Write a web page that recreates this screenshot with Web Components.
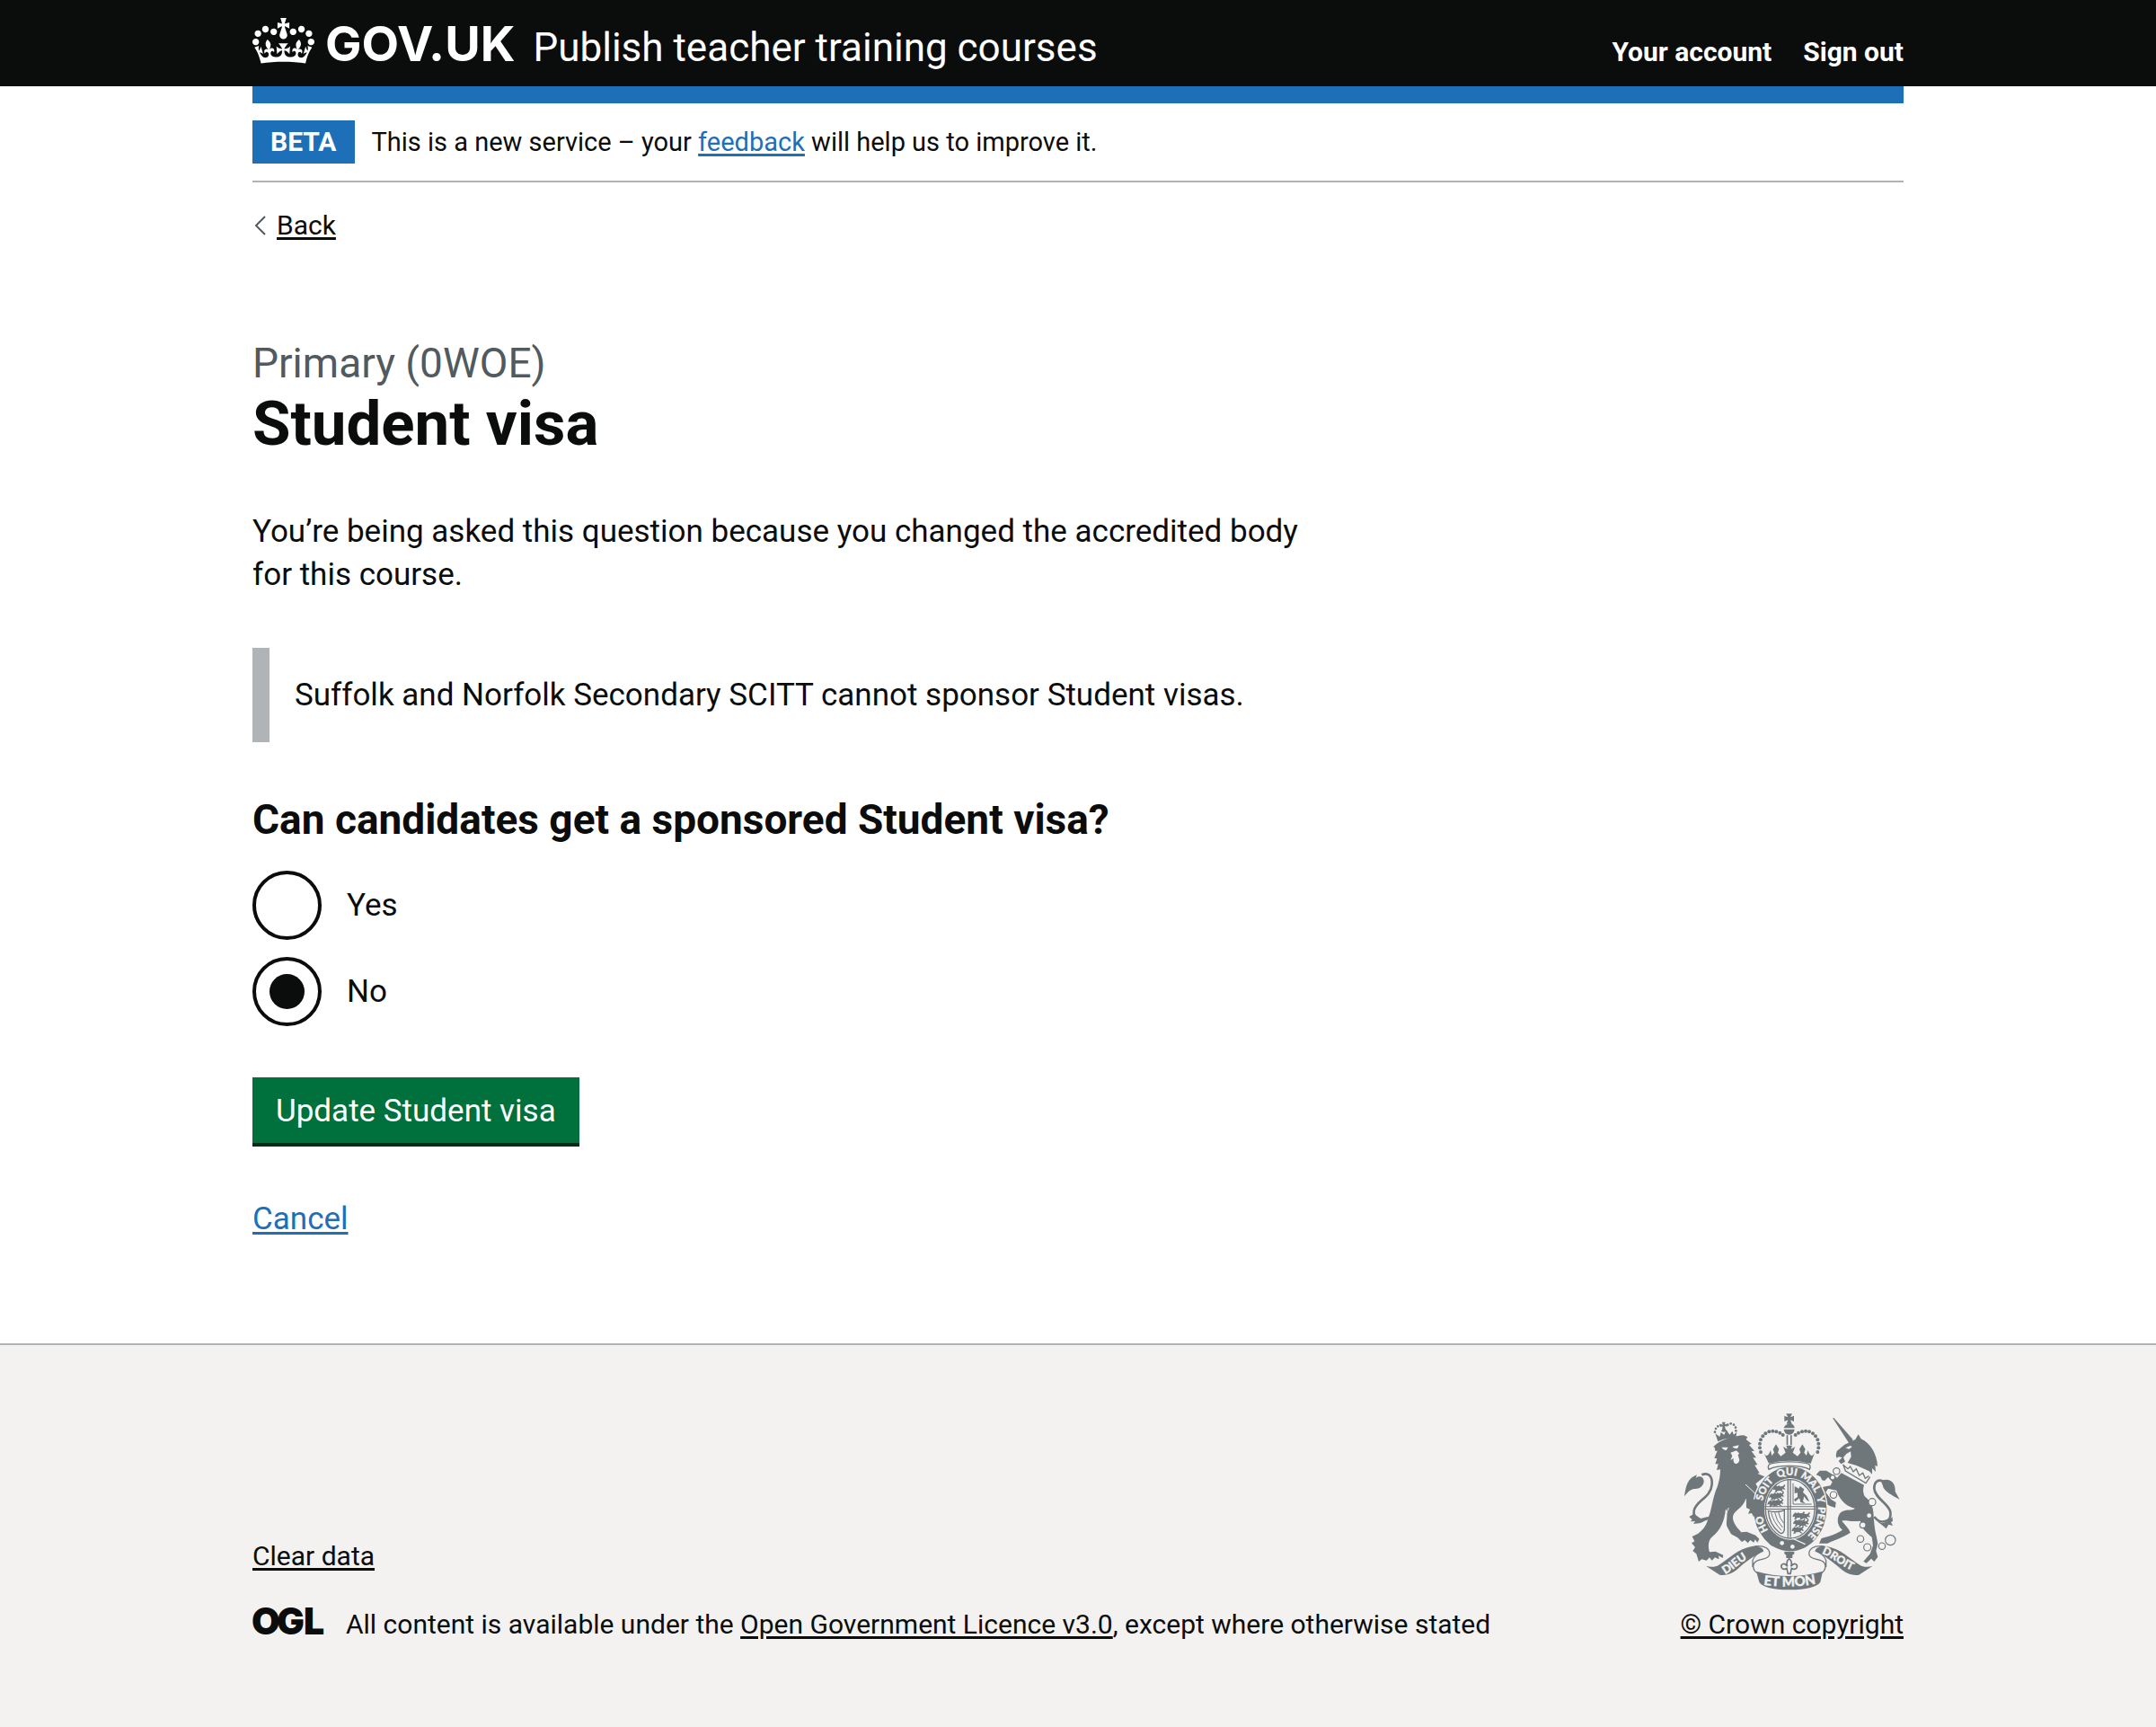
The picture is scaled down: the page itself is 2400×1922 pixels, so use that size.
<!DOCTYPE html>
<html lang="en">
<head>
<meta charset="utf-8">
<meta name="viewport" content="width=device-width, initial-scale=1">
<title>Student visa – Publish teacher training courses – GOV.UK</title>
<style>
  :root {
    --ink: #0b0c0c;
    --blue: #1d70b8;
    --mid-grey: #b1b4b6;
    --light-grey: #f3f2f1;
    --secondary: #505a5f;
    --green: #00703c;
    --green-dark: #002d18;
    --crest: #6f777b;
    --page-width: 1838px;
    --text-s: 30px;
    --text-m: 35px;
    --text-l: 46px;
    --text-xl: 69px;
    --line-s: 38px;
    --line-m: 48px;
  }
  body {
    margin: 0;
    min-height: 100vh;
    display: flex;
    flex-direction: column;
    font-family: Roboto, Arial, sans-serif;
    font-size: var(--text-m);
    line-height: var(--line-m);
    color: var(--ink);
    background: #fff;
  }
  site-footer { flex: 1; }
</style>
</head>
<body>
<site-header service="Publish teacher training courses">
  <site-link slot="nav" tone="inverse" href="#account">Your account</site-link>
  <site-link slot="nav" tone="inverse" href="#sign-out">Sign out</site-link>
</site-header>
<page-container>
  <phase-banner tag="BETA">This is a new service – your <site-link href="#feedback">feedback</site-link> will help us to improve it.</phase-banner>
  <back-link href="#back">Back</back-link>
  <page-main>
    <page-heading caption="Primary (0WOE)">Student visa</page-heading>
    <body-text>You’re being asked this question because you changed the accredited body for this course.</body-text>
    <inset-text>Suffolk and Norfolk Secondary SCITT cannot sponsor Student visas.</inset-text>
    <visa-form></visa-form>
  </page-main>
</page-container>
<site-footer></site-footer>

<script>
const define = (name, render) => customElements.define(name, class extends HTMLElement {
  connectedCallback() {
    if (this.shadowRoot) return;
    this.attachShadow({ mode: 'open' }).innerHTML = render(this);
  }
});

define('site-link', el => `
  <style>
    :host { display: inline; }
    a { color: var(--blue); text-decoration-thickness: 3px; text-underline-offset: 3px; }
    :host([tone="plain"]) a { color: var(--ink); }
    :host([tone="inverse"]) a { color: #fff; font-weight: 700; text-decoration: none; }
  </style>
  <a href="${el.getAttribute('href')}"><slot></slot></a>`);

define('page-container', () => `
  <style>
    :host { display: block; box-sizing: border-box; width: calc(100% - 60px); max-width: var(--page-width); margin: 0 auto; }
  </style>
  <slot></slot>`);

define('crown-logo', () => `
  <style>
    :host { display: block; color: #fff; font: 700 54px/54px Inter, Arial, sans-serif; white-space: nowrap; }
    svg { width: 69px; height: 51px; margin-right: 12px; vertical-align: -3px; fill: currentColor; }
  </style>
  <svg viewBox="0 0 132 97" preserveAspectRatio="none" aria-hidden="true"><path d="M25 30.2c3.5 1.5 7.7-.2 9.1-3.7 1.5-3.6-.2-7.8-3.9-9.2-3.6-1.4-7.6.3-9.1 3.9-1.4 3.5.3 7.5 3.9 9zM9 39.5c3.6 1.5 7.8-.2 9.2-3.7 1.5-3.6-.2-7.8-3.9-9.1-3.6-1.5-7.6.2-9.1 3.8-1.4 3.5.3 7.5 3.8 9zM4.4 57.2c3.5 1.5 7.7-.2 9.1-3.8 1.5-3.6-.2-7.7-3.9-9.1-3.5-1.5-7.6.3-9.1 3.8-1.4 3.5.3 7.6 3.9 9.1zm38.3-21.4c3.5 1.5 7.7-.2 9.1-3.8 1.5-3.6-.2-7.7-3.9-9.1-3.6-1.5-7.6.3-9.1 3.8-1.3 3.6.4 7.7 3.9 9.1zm64.4-5.6c-3.6 1.5-7.8-.2-9.1-3.7-1.5-3.6.2-7.8 3.8-9.2 3.6-1.4 7.7.3 9.2 3.9 1.3 3.5-.4 7.5-3.9 9zm15.9 9.3c-3.6 1.5-7.7-.2-9.1-3.7-1.5-3.6.2-7.8 3.7-9.1 3.6-1.5 7.7.2 9.2 3.8 1.5 3.5-.3 7.5-3.8 9zm4.7 17.7c-3.6 1.5-7.8-.2-9.2-3.8-1.5-3.6.2-7.7 3.9-9.1 3.6-1.5 7.7.3 9.2 3.8 1.3 3.5-.4 7.6-3.9 9.1zM89.3 35.8c-3.6 1.5-7.8-.2-9.2-3.8-1.4-3.6.2-7.7 3.9-9.1 3.6-1.5 7.7.3 9.2 3.8 1.4 3.6-.3 7.7-3.9 9.1zM69.7 17.7l8.9 4.7V9.3l-8.9 2.8c-.2-.3-.5-.6-.9-.9L72.4 0H59.6l3.5 11.2c-.3.3-.6.5-.9.9l-8.8-2.8v13.1l8.8-4.7c.3.3.6.7.9.9l-5 15.4v.1c-.2.8-.4 1.6-.4 2.4 0 4.1 3.1 7.5 7 8.1h.2c.3 0 .7.1 1 .1.4 0 .7 0 1-.1h.2c4-.6 7.1-4.1 7.1-8.1 0-.8-.1-1.7-.4-2.4V34l-5.1-15.4c.4-.2.7-.6 1-.9zM66 92.8c16.9 0 32.8 1.1 47.1 3.2 4-16.9 8.9-26.7 14-33.5l-9.6-3.4c1 4.9 1.1 7.2 0 10.2-1.5-1.4-3-4.3-4.2-8.7L108.6 76c2.8-2 5-3.2 7.5-3.3-4.4 9.4-10 11.9-13.6 11.2-4.3-.8-6.3-4.6-5.6-7.9 1-4.7 5.7-5.9 8-.5 4.3-8.7-3-11.4-7.6-8.8 7.1-7.2 7.9-13.5 2.1-21.1-8 6.1-8.1 12.3-4.5 20.8-4.7-5.4-12.1-2.5-9.5 6.2 3.4-5.2 7.9-2 7.2 3.1-.6 4.3-6.4 7.8-13.5 7.2-10.3-.9-10.9-8-11.2-13.8 2.5-.5 7.1 1.8 11 7.3L80.2 60c-4.1 4.4-8 5.3-12.3 5.4 1.4-4.4 8-11.6 8-11.6H55.5s6.4 7.2 7.9 11.6c-4.2-.1-8-1-12.3-5.4l1.4 16.4c3.9-5.5 8.5-7.7 10.9-7.3-.3 5.8-.9 12.8-11.1 13.8-7.2.6-12.9-2.9-13.5-7.2-.7-5 3.8-8.3 7.1-3.1 2.7-8.7-4.6-11.6-9.4-6.2 3.7-8.5 3.6-14.7-4.6-20.8-5.8 7.6-5 13.9 2.2 21.1-4.7-2.6-11.9.1-7.7 8.8 2.3-5.5 7.1-4.2 8.1.5.7 3.3-1.3 7.1-5.7 7.9-3.5.7-9-1.8-13.5-11.2 2.5.1 4.7 1.3 7.5 3.3l-4.7-15.4c-1.2 4.4-2.7 7.2-4.3 8.7-1.1-3-.9-5.3 0-10.2l-9.5 3.4c5 6.9 9.9 16.7 14 33.5 14.8-2.1 30.8-3.2 47.7-3.2z"/></svg><span>GOV.UK</span>`);

define('site-header', el => `
  <style>
    :host { display: block; background: var(--ink); }
    header { display: flex; align-items: baseline; box-sizing: border-box; min-height: 96px; padding: 20px 0 0; }
    a { color: #fff; text-decoration: none; }
    .service { margin-left: 20px; font-size: 44px; line-height: 48px; }
    nav { display: flex; gap: 35px; margin-left: auto; font-size: var(--text-s); line-height: var(--line-s); }
    .bar { height: 19px; background: var(--blue); }
    .under { background: #fff; }
  </style>
  <page-container><header>
    <a href="#home" aria-label="GOV.UK"><crown-logo></crown-logo></a>
    <a class="service" href="#service">${el.getAttribute('service')}</a>
    <nav aria-label="Account"><slot name="nav"></slot></nav>
  </header></page-container>
  <div class="under"><page-container><div class="bar"></div></page-container></div>`);

define('phase-banner', el => `
  <style>
    :host { display: flex; align-items: baseline; gap: 19px; padding: 19px 0; border-bottom: 2px solid var(--mid-grey); font-size: 29px; line-height: 48px; }
    strong { padding: 0 20px; background: var(--blue); color: #fff; font-size: var(--text-s); }
  </style>
  <strong>${el.getAttribute('tag')}</strong><span><slot></slot></span>`);

define('back-link', el => `
  <style>
    :host { display: block; padding-top: 29px; font-size: var(--text-s); line-height: var(--line-s); }
    a { display: inline-flex; align-items: center; gap: 11px; color: var(--ink); text-decoration: none; }
    span { text-decoration: underline 3px; text-underline-offset: 3px; }
    svg { width: 16px; height: 24px; fill: none; stroke: var(--secondary); stroke-width: 2; }
  </style>
  <a href="${el.getAttribute('href')}"><svg viewBox="0 0 16 24" aria-hidden="true"><path d="M14 2 4 12l10 10"/></svg><span><slot></slot></span></a>`);

define('page-main', () => `
  <style>
    :host { display: block; padding: 103px 0 114px; }
    main { display: flex; flex-direction: column; gap: 57px; max-width: 1206px; }
  </style>
  <main><slot></slot></main>`);

define('page-heading', el => `
  <style>
    :host { display: block; }
    .caption { display: block; color: var(--secondary); font-size: var(--text-l); line-height: 58px; }
    h1 { margin: 0; font-size: var(--text-xl); line-height: 78px; font-weight: 700; }
  </style>
  <span class="caption">${el.getAttribute('caption')}</span><h1><slot></slot></h1>`);

define('body-text', () => `
  <style>:host { display: block; } p { margin: 0; }</style>
  <p><slot></slot></p>`);

define('inset-text', () => `
  <style>:host { display: block; padding: 29px 28px 28px; border-left: 19px solid var(--mid-grey); }</style>
  <slot></slot>`);

define('visa-form', () => `
  <style>
    :host { display: block; }
    form { display: flex; flex-direction: column; align-items: flex-start; gap: 57px; }
    fieldset { margin: 0; padding: 0; border: 0; min-width: 0; }
    legend { padding: 0; margin-bottom: 28px; font-size: var(--text-l); line-height: 58px; font-weight: 700; }
    .options { display: flex; flex-direction: column; gap: 19px; }
    .option { display: flex; align-items: center; gap: 28px; }
    input {
      appearance: none; flex: none; box-sizing: border-box; width: 77px; height: 77px; margin: 0;
      border: 4px solid var(--ink); border-radius: 50%;
      display: grid; place-items: center;
    }
    input:checked::before { content: ""; width: 39px; height: 39px; border-radius: 50%; background: var(--ink); }
    button {
      margin: 0; padding: 16px 26px 13px; border: 0; border-radius: 0;
      background: var(--green); color: #fff; box-shadow: 0 4px 0 var(--green-dark);
      font: inherit; line-height: 44px;
    }
    .cancel { margin-top: 4px; }
  </style>
  <form>
    <fieldset>
      <legend>Can candidates get a sponsored Student visa?</legend>
      <div class="options">
        <div class="option"><input type="radio" name="visa" id="visa-yes" value="yes"><label for="visa-yes">Yes</label></div>
        <div class="option"><input type="radio" name="visa" id="visa-no" value="no" checked><label for="visa-no">No</label></div>
      </div>
    </fieldset>
    <button type="submit">Update Student visa</button>
    <site-link class="cancel" href="#cancel">Cancel</site-link>
  </form>`);

define('ogl-logo', () => `
  <style>
    :host { display: block; flex: none; }
    svg { display: block; width: 79px; height: 38px; overflow: visible; fill: var(--ink); font: 900 41px Inter, Arial, sans-serif; }
  </style>
  <svg viewBox="0 0 79 38" role="img" aria-label="Open Government Licence"><text x="-1 27 57" y="30">OGL</text></svg>`);

const pearls = [[357,168],[354,154],[354,140],[357,127],[364,115],[373,106],[385,100],[397,98],[409,100],[421,104],[431,111]];
const dots = (list, r) => list.map(([x, y]) => `<circle cx="${x}" cy="${y}" r="${r}"/>`).join('');
const beast = 'M0 8l7-7 7 3 3-4 5 4 9-1 5-6 3 4-5 7 5 4-3 3-6-3-2 5 6 3-3 3-8-5-10 1-4 5-6-1 4-5-3-4-6 2z';

define('royal-arms', () => `
  <style>
    :host { display: block; }
    svg { display: block; width: 244px; height: 198px; fill: var(--crest); }
    .line { fill: none; stroke: var(--crest); }
    .paper { fill: var(--light-grey); }
    .gap { fill: none; stroke: var(--light-grey); }
    text { fill: var(--light-grey); stroke: var(--light-grey); stroke-width: 1; font-family: Lato, Arial, sans-serif; font-weight: 900; }
  </style>
  <svg viewBox="96 36 732 594" role="img" aria-label="Royal coat of arms">
    <defs>
      <path id="garter" d="M455 471A94 113 0 0 1 455 245A94 113 0 0 1 455 471"/>
      <path id="left" d="M238 576C268 562 296 526 340 512"/>
      <path id="mid" d="M366 611Q452 625 545 607"/>
      <path id="right" d="M560 507C606 524 634 560 690 572"/>
      <path id="beast" d="${beast}"/>
    </defs>

    <!-- lion -->
    ${dots([[204,101],[207,90],[214,82],[223,78],[247,77],[257,73],[267,77],[273,86],[274,97]], 4)}
    <path d="M228 68h11l-2 8 8-2v9l-8-2 2 10 6 8-12 2-8-2 4-8 0-9-7 3v-9l8 1z"/>
    <path d="M205 106l9 27Q243 119 274 121l3-20-10 9-5-12-9 12-11-16-7 17-11-9-4 15z"/>
    <path d="M198 151l15-13C240 122 270 114 300 112l13 6-5 8 18 14-8 4 18 20-10 1 16 22-11 0 15 23-9 2 16 26-7 2 24 10-30 24 26 44 14 36 0 26-9-6-4 12-10-12-8 10-6-12-14 2 6-14-12-6 12-10-6-12-22-8C300 345 290 352 272 368C258 382 264 400 278 420l14 16 18-2 30 12 12 12-6 12-8-10-4 10-12-8-8 10-10-10-10 6-14-14-22-12-14-26C240 400 250 370 240 358C236 400 222 430 196 450C182 462 180 480 186 502l20-2 26 12-2 10-14-8 2 12-14-6-10 10-8-10-10 10-16-4-10 8-8-26-12-10 8-12-12-14 10-6-8-16 20-10C176 420 178 400 188 370C196 340 200 310 212 284C220 262 222 240 222 226l-12 2 5-20-10 0 6-18-9-2 10-24-7 0-2-12z"/>
    <path class="paper" d="M226 152l22 0-6 10q-8 2-16-10zM262 150l22-5-4 10q-10 4-18-5zM256 170l20-7 10 10-5 4 5 18q-4 14-14 12-8-4-6-18l-10 6 6-14z"/>
    <path class="gap" stroke-width="3" d="M306 276l30 28 24 44M250 354l-8 20"/>
    <path class="line" stroke-width="8" d="M187 386C160 404 130 392 134 364C140 330 190 322 194 276C196 244 180 236 160 244"/>
    <path d="M102 316C106 290 110 262 132 250l12-6-4 10C152 246 166 250 167 264C168 282 150 292 136 291C120 292 112 304 102 316zM118 384l16-10 22 16 24-6C170 402 156 408 132 407l6-8-16 1 6-6z"/>

    <!-- unicorn -->
    <path d="M597 54l5 1 62 70 0 10-12 4z"/>
    <path d="M608 179l3-14 26-22 36-17 10-17 9 15C722 138 746 174 747 216l-8-4 2 22-12-12 0 20-10-10-40-18-32-10 12-20-2-18-14 8-10 12 6 14-14 8-8-10 12-12-12-2-6 4z"/>
    <path class="paper" d="M640 154l16-7 6 3-10 8z"/>
    <path class="line" stroke-width="4" d="M632 209l8 22 68 41 14-21M634 212l14 12 8-8 10 18 10-10 10 22 12-8 8 18 12-8"/>
    <path d="M626 238l76 40C698 292 698 302 704 316C724 332 734 352 734 382C736 410 738 430 744 452l4 22-6 24 6 20-12 16-10-10-16 15-10-6 22-25 10-28-4-28C712 438 690 420 690 398C660 402 640 394 628 398C640 412 652 424 656 437C630 455 604 460 580 473l-28 0 8-17 22-6C600 445 618 436 630 428C610 414 610 384 624 370C640 356 660 366 672 356C650 352 622 334 610 296l-28-6-8 12 18 24 16 10-2 18-18-6-18-10-6-20-10-14 12-20 24-4 6-12-14-16-12 12-8-2-6-12-14-6 12-14 22 0 22 14 14 10z"/>
    <path class="line" stroke-width="8" d="M736 384C756 412 796 402 790 368C784 340 738 322 736 290C736 266 750 258 766 266"/>
    <path d="M758 264C790 252 808 272 806 300l15 26-20-10C790 306 768 300 764 278zM744 398l20 8 16-6 16-16 2 14-6 4 6 12-14-4-8 14-14-12z"/>
    <g class="paper" stroke="var(--crest)" stroke-width="3.5">
      <circle cx="610" cy="232" r="11"/><circle cx="597" cy="253" r="8"/><circle cx="600" cy="311" r="11"/><circle cx="729" cy="335" r="12"/>
      <circle cx="719" cy="380" r="9"/><circle cx="698" cy="412" r="10"/><circle cx="690" cy="458" r="11"/>
      <circle cx="713" cy="486" r="12"/><circle cx="762" cy="482" r="11"/><circle cx="790" cy="462" r="17"/>
    </g>

    <!-- garter and shield -->
    <ellipse class="paper" cx="455" cy="358" rx="126" ry="145"/>
    <ellipse cx="455" cy="358" rx="122" ry="141"/>
    <ellipse class="paper" cx="455" cy="358" rx="86" ry="103"/>
    <ellipse class="line" cx="455" cy="358" rx="82" ry="98" stroke-width="4"/>
    <path d="M370 349h170v3h-170zM370 357h170v3h-170zM446 258h4v194h-4zM454 258h4v194h-4z"/>
    <use href="#beast" x="400" y="279"/><use href="#beast" x="396" y="303"/><use href="#beast" x="394" y="327"/>
    <use href="#beast" x="465" y="369"/><use href="#beast" x="467" y="393"/><use href="#beast" x="462" y="417"/>
    <use href="#beast" x="386" y="305"/><use href="#beast" x="381" y="328"/>
    <use href="#beast" x="483" y="371"/><use href="#beast" x="479" y="395"/>
    <path d="M470 282l14 8 4-8 14 10-4 10 12 12 10 20-10-6-8-12-4 16 8 8-16-4-4-14-14 12-4-8 12-8 0-14-10 2z"/>
    <path class="line" stroke-width="3" d="M465 272v70h62"/>
    <path class="line" stroke-width="4" d="M382 364q32 8 54-2v66q-6 18-18 8q-32-26-36-72z"/>
    <path class="line" stroke-width="3" d="M392 370q6 30 34 60M404 370q4 26 26 50M416 368q4 22 18 38"/>
    <path class="line" stroke="var(--light-grey)" stroke-width="11" d="M406 446q-20-2-20 14 2 18 20 18"/>
    <path class="line" stroke-width="3" d="M406 446q-20-2-20 14 2 18 20 18M388 460h14"/>
    <circle class="paper" cx="428" cy="472" r="7"/><circle class="paper" cx="463" cy="484" r="7"/>
    <path class="gap" stroke-width="4" d="M462 456l44 20"/>
    <g font-size="34" text-anchor="middle">
      <text><textPath href="#garter" startOffset="17.5%">HO</textPath></text>
      <text><textPath href="#garter" startOffset="35%">SOIT</textPath></text>
      <text><textPath href="#garter" startOffset="48.5%">QUI</textPath></text>
      <text><textPath href="#garter" startOffset="61%">MAL</textPath></text>
      <text><textPath href="#garter" startOffset="70.5%">Y</textPath></text>
      <text><textPath href="#garter" startOffset="82%">PENSE</textPath></text>
    </g>
    <path d="M308 296l28 32 22 24 8 28-9-6-6 10-8-10-10 10-6-12-12 2 6-14-12-6z"/>

    <!-- imperial crown -->
    ${dots(pearls, 6)}${dots(pearls.map(([x, y]) => [904 - x, y]), 6)}
    <path d="M442 40h20l-6 12 12-5v19l-12-5 5 13h-18l5-13-12 5v-19l12 5zM434 88q2-12 18-14t18 14zM434 92h36q-2 16-18 18-16-2-18-18z"/>
    <path d="M443 112h5v32h-5zM456 112h5v32h-5z"/>
    <path d="M366 168q12 26 24-6l4 18 8-10-4-12 10-16 10 16-4 12 10 12 16-12-8-20 14 8-4-12h20l-4 12 14-8-8 20 16 12 10-12-4-12 10-16 10 16-4 12 8 10 4-18q12 32 24 6l-14 38Q452 188 384 206z"/>
    <path class="paper" stroke="var(--crest)" stroke-width="4" d="M384 226Q376 208 398 205Q452 196 508 205Q528 208 520 226Q500 214 452 214T384 226z"/>

    <!-- ribbon -->
    <g id="fold">
      <path d="M174 548C190 553 206 552 217 545C250 525 280 490 330 482l14 0Q366 488 366 498C334 515 306 534 276 562C258 576 240 581 220 578z"/>
      <path class="line" stroke-width="4" d="M336 483C372 478 390 492 386 512C380 532 334 520 332 548C332 560 340 570 350 574M366 498C346 506 334 514 330 530V552"/>
    </g>
    <use href="#fold" transform="matrix(-1 0 0 1 905 0)"/>
    <path d="M342 566Q452 598 564 566L556 602Q540 626 452 628Q366 626 352 602z"/>
    <path class="line" stroke-width="5" d="M452 524q-12 10-6 26-8-12-16-8-8 6-2 14 8 6 16 0l4 18h8l4-18q8 6 16 0 6-8-2-14-8-4-16 8 6-16-6-26z"/>
    <path d="M436 500h33v8l-6 4v10h-21v-10l-6-4z"/>
    <text font-size="38"><textPath href="#left">DIEU</textPath></text>
    <text font-size="45"><textPath href="#mid">ET MON</textPath></text>
    <text font-size="37"><textPath href="#right">DROIT</textPath></text>
  </svg>`);

define('site-footer', () => `
  <style>
    :host { display: block; background: var(--light-grey); border-top: 2px solid var(--mid-grey); font-size: var(--text-s); line-height: var(--line-s); }
    footer { display: flex; align-items: flex-end; justify-content: space-between; gap: 57px; padding: 75px 0 57px; }
    .meta { display: flex; flex-direction: column; gap: 38px; }
    .licence { display: flex; gap: 25px; }
    .crown { display: flex; flex-direction: column; align-items: center; gap: 19px; }
  </style>
  <page-container><footer>
    <div class="meta">
      <div><site-link tone="plain" href="#clear">Clear data</site-link></div>
      <div class="licence">
        <ogl-logo></ogl-logo>
        <span>All content is available under the <site-link tone="plain" href="#licence">Open Government Licence v3.0</site-link>, except where otherwise stated</span>
      </div>
    </div>
    <div class="crown">
      <royal-arms></royal-arms>
      <site-link tone="plain" href="#copyright">© Crown copyright</site-link>
    </div>
  </footer></page-container>`);
</script>
</body>
</html>
